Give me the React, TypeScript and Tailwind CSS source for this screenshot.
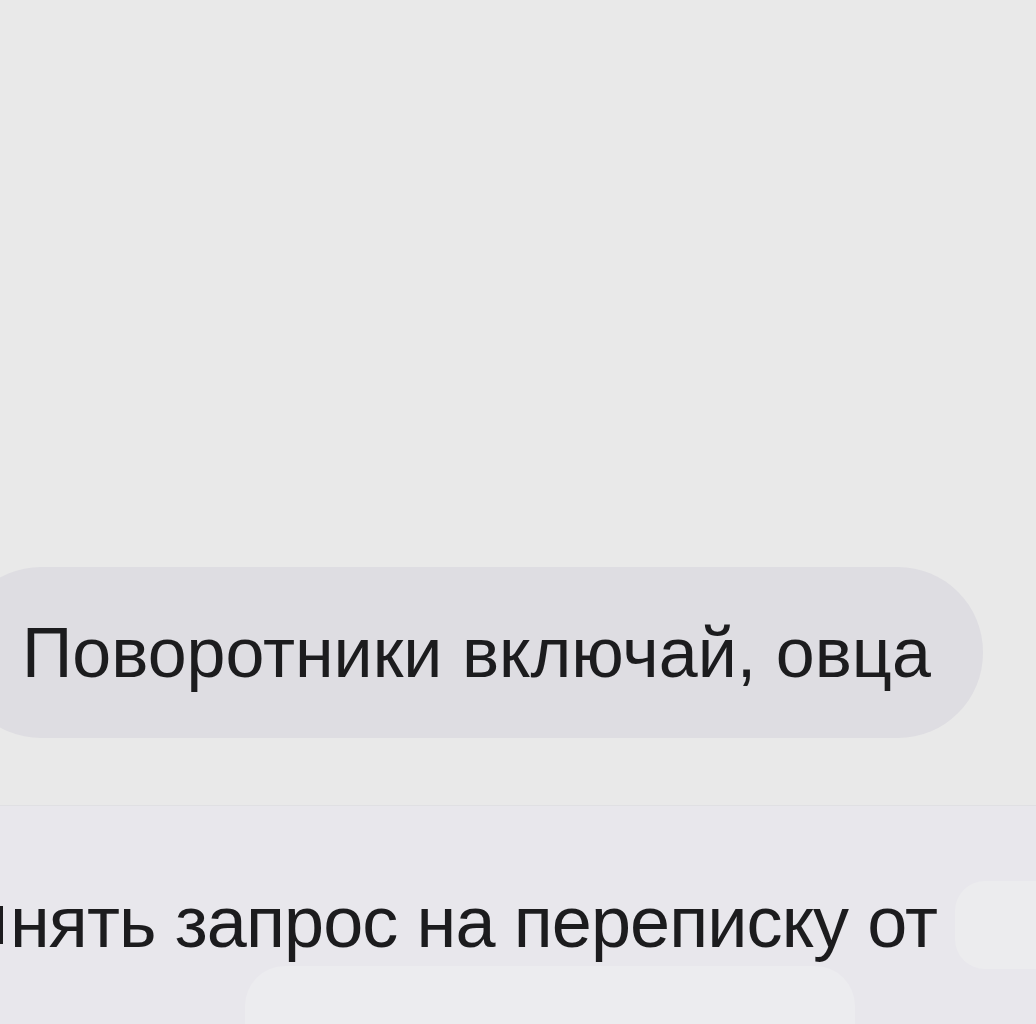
export default function App() {
  return (
    <div
      className="w-[1036px] h-[1024px] overflow-hidden bg-[#e9e9e9] flex flex-col"
      style={{ fontFamily: '"Liberation Sans", Arial, sans-serif' }}
    >
      <div className="h-[567px] shrink-0" />
      <div className="flex shrink-0">
        <div className="ml-[-44px] w-[1027px] h-[171px] rounded-[85px] bg-[#dedde2] flex items-center pl-[66px]">
          <span className="text-[70px] leading-none text-[#1c1c1e] tracking-[0px] whitespace-nowrap">
            Поворотники включай, овца
          </span>
        </div>
      </div>
      <div className="h-[67px] shrink-0" />
      <div className="h-[1px] bg-[#e0e0e3] shrink-0" />
      <div className="flex-1 bg-[#e8e7ec] relative">
        <div className="pt-[80px] flex items-end">
          <div className="w-[3px] h-[38px] mb-[14px] bg-[#1c1c1e] shrink-0" />
          <span className="ml-[7px] text-[72px] leading-none text-[#1c1c1e] tracking-[-0.9px] whitespace-nowrap">
            нять запрос на переписку от
          </span>
        </div>
        <div className="absolute left-[245px] top-[160px] w-[610px] h-[120px] rounded-[40px] bg-[#ececef]" />
        <div className="absolute left-[955px] top-[75px] w-[120px] h-[88px] rounded-[30px] bg-[#ececee]" />
      </div>
    </div>
  );
}
